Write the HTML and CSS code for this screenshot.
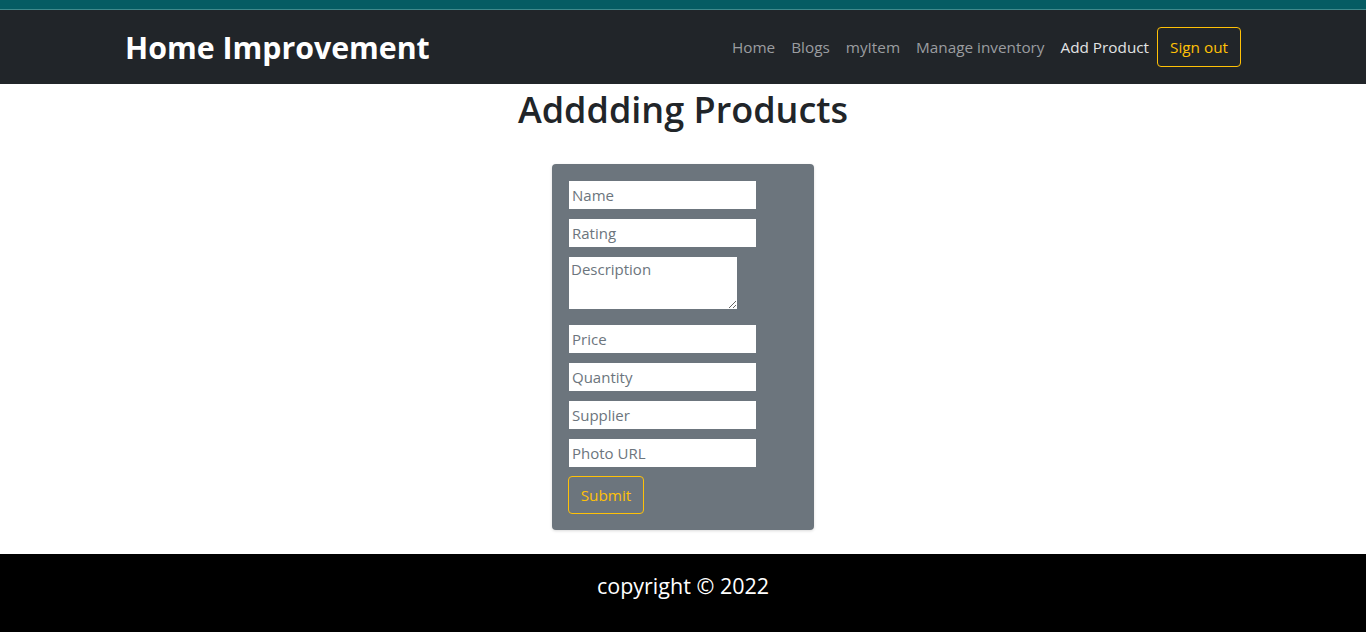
FILE: index.html
```html
<!DOCTYPE html>
<html lang="en">
<head>
<meta charset="utf-8">
<title>Add Product</title>
<link rel="stylesheet" href="styles.css">
</head>
<body>
<div class="topbar"></div>
<nav class="navbar">
  <div class="container">
    <a class="brand" href="#">Home Improvement</a>
    <div class="nav">
      <a class="nav-link" href="#">Home</a>
      <a class="nav-link" href="#">Blogs</a>
      <a class="nav-link" href="#">myItem</a>
      <a class="nav-link" href="#">Manage inventory</a>
      <a class="nav-link active" href="#">Add Product</a>
      <button class="btn-outline" type="button">Sign out</button>
    </div>
  </div>
</nav>
<main class="main">
  <h1 class="title">Adddding Products</h1>
  <form class="card">
    <input class="field" type="text" placeholder="Name">
    <input class="field" type="text" placeholder="Rating">
    <textarea class="area" placeholder="Description"></textarea>
    <input class="field" type="text" placeholder="Price">
    <input class="field" type="text" placeholder="Quantity">
    <input class="field" type="text" placeholder="Supplier">
    <input class="field" type="text" placeholder="Photo URL">
    <button class="btn-outline submit" type="button">Submit</button>
  </form>
</main>
<footer class="footer">
  <p class="copy">copyright © 2022</p>
</footer>
</body>
</html>
```
FILE: styles.css
```css
* { box-sizing: border-box; }
html, body { margin: 0; padding: 0; }
body {
  font-family: "Open Sans", "Noto Sans", "Liberation Sans", sans-serif;
  color: #212529;
  background: #fff;
  font-size: 16px;
}
.topbar {
  height: 10px;
  background: #055c63;
  border-bottom: 1px solid #3f8a8c;
}
.navbar {
  background: #212529;
  height: 74px;
}
.container {
  width: 1140px;
  margin: 0 auto;
  padding: 0 12px;
  height: 100%;
  display: flex;
  align-items: center;
  justify-content: space-between;
}
.brand {
  color: #fff;
  font-weight: 700;
  font-size: 30.3px;
  text-decoration: none;
}
.nav {
  display: flex;
  align-items: center;
}
.nav-link {
  color: #9b9da0;
  text-decoration: none;
  font-size: 15.3px;
  padding: 0 8px;
}
.nav-link.active { color: #e2e3e4; }
.btn-outline {
  font-family: inherit;
  background: transparent;
  color: #ffc107;
  border: 1px solid #ffc107;
  border-radius: 4px;
  font-size: 15.3px;
  height: 40px;
  padding: 0 12px;
  cursor: pointer;
}
.main {
  display: flex;
  flex-direction: column;
  align-items: center;
  padding-bottom: 24px;
}
.title {
  margin: 0 0 28px;
  font-size: 36px;
  font-weight: 600;
  line-height: 52px;
}
.card {
  width: 262px;
  background: #6c757d;
  border-radius: 4px;
  box-shadow: 0 1px 3px rgba(0,0,0,0.15);
  padding: 17px 17px 16px;
  display: flex;
  flex-direction: column;
  align-items: flex-start;
  gap: 10px;
}
.field, .area {
  font-family: inherit;
  font-size: 15px;
  color: #495057;
  background: #fff;
  border: none;
  outline: none;
  padding: 0 3px;
  margin: 0;
}
.field {
  width: 187px;
  height: 28px;
}
.area {
  width: 168px;
  height: 52px;
  padding: 2px 2px;
  margin-bottom: 6px;
  resize: both;
}
.field::placeholder, .area::placeholder { color: #6c757d; }
.submit {
  height: 38px;
  width: 76px;
  padding: 0;
  margin-left: -1px;
  margin-top: -1px;
}
.footer {
  background: #000;
  height: 90px;
  display: flex;
  justify-content: center;
}
.copy {
  margin: 20px 0 0;
  color: #fff;
  font-size: 21.5px;
  line-height: 24px;
}
```
